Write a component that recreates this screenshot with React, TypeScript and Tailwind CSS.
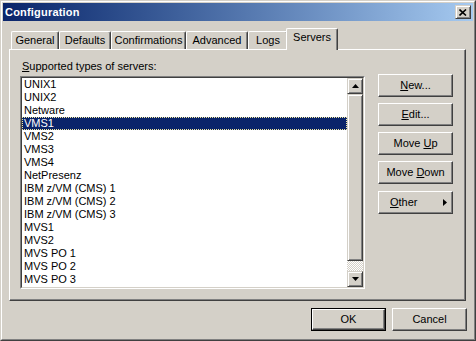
import React from "react";

const servers = [
  "UNIX1",
  "UNIX2",
  "Netware",
  "VMS1",
  "VMS2",
  "VMS3",
  "VMS4",
  "NetPresenz",
  "IBM z/VM (CMS) 1",
  "IBM z/VM (CMS) 2",
  "IBM z/VM (CMS) 3",
  "MVS1",
  "MVS2",
  "MVS PO 1",
  "MVS PO 2",
  "MVS PO 3",
  "MVS PO 4",
];

const tabs = [
  { label: "General", width: "w-[48px]" },
  { label: "Defaults", width: "w-[52px]" },
  { label: "Confirmations", width: "w-[75px]" },
  { label: "Advanced", width: "w-[62px]" },
  { label: "Logs", width: "w-[40px]" },
];

const raised =
  "border border-t-white border-l-white border-r-[#404040] border-b-[#404040] shadow-[inset_-1px_-1px_#808080] bg-[#d4d0c8]";

const scrollPart =
  "border border-t-[#d4d0c8] border-l-[#d4d0c8] border-r-[#404040] border-b-[#404040] shadow-[inset_1px_1px_#ffffff,inset_-1px_-1px_#808080] bg-[#d4d0c8]";

function PushButton({ children }: { children: React.ReactNode }) {
  return (
    <div className={`${raised} w-[75px] h-[23px] flex items-center justify-center text-black`}>
      {children}
    </div>
  );
}

export default function App() {
  const selected = 3;

  return (
    <div className="w-[476px] h-[341px] bg-[#d4d0c8] font-['Liberation_Sans',Arial,sans-serif] text-[11px] leading-[13px] text-black border border-t-[#d4d0c8] border-l-[#d4d0c8] border-r-[#404040] border-b-[#404040]">
      <div className="h-full flex flex-col border border-t-white border-l-white border-r-[#808080] border-b-[#808080] p-[1px]">
        {/* Title bar */}
        <div className="h-[18px] flex items-center justify-between bg-gradient-to-r from-[#0a246a] to-[#a6caf0] pl-[2px] pr-[2px]">
          <span className="font-bold text-white text-[11px] tracking-[0.2px]">Configuration</span>
          <div className={`${scrollPart} w-[16px] h-[14px] flex items-center justify-center`}>
            <svg width="8" height="7" viewBox="0 0 8 7">
              <path d="M0.5 0.5 L7 6.5 M7 0.5 L0.5 6.5" stroke="black" strokeWidth="1.6" />
            </svg>
          </div>
        </div>

        <div className="flex-1 flex flex-col pl-[6px]">
          {/* Tabs */}
          <div className="mt-[7px] h-[21px] flex items-end pl-[2px]">
            {tabs.map((t) => (
              <div
                key={t.label}
                className={`${t.width} h-[18px] flex justify-center pt-[2px] border-t border-l border-r border-t-white border-l-white border-r-[#404040] shadow-[inset_-1px_0_#808080] rounded-t-[2px]`}
              >
                {t.label}
              </div>
            ))}
            <div className="relative z-10 -ml-[2px] w-[52px] h-[22px] -mb-[1px] flex justify-center pt-[2px] bg-[#d4d0c8] border-t border-l border-r border-t-white border-l-white border-r-[#404040] shadow-[inset_-1px_0_#808080] rounded-t-[2px]">
              Servers
            </div>
          </div>

          {/* Panel */}
          <div className="w-[457px] h-[252px] flex border border-t-white border-l-white border-r-[#404040] border-b-[#404040] shadow-[inset_-1px_-1px_#808080] pt-[10px] pl-[10px]">
            <div className="flex flex-col">
              <div className="pl-[2px]">
                <u>S</u>upported types of servers:
              </div>
              <div className="mt-[3px] w-[345px] h-[213px] border border-t-[#808080] border-l-[#808080] border-r-white border-b-white">
                <div className="h-full flex border border-t-[#404040] border-l-[#404040] border-r-[#d4d0c8] border-b-[#d4d0c8] bg-white">
                  <div className="flex-1 overflow-hidden">
                    {servers.map((s, i) =>
                      i === selected ? (
                        <div
                          key={s}
                          className="h-[13px] leading-[11px] pl-[1px] bg-[#0a246a] text-white border border-dotted border-[#f2eaa0] whitespace-nowrap"
                        >
                          {s}
                        </div>
                      ) : (
                        <div key={s} className="h-[13px] pl-[2px] whitespace-nowrap">
                          {s}
                        </div>
                      )
                    )}
                  </div>
                  {/* Scrollbar */}
                  <div className="w-[16px] flex flex-col">
                    <div className={`${scrollPart} h-[16px] flex items-center justify-center`}>
                      <svg width="7" height="4" viewBox="0 0 7 4">
                        <polygon points="0,4 7,4 3.5,0" fill="black" />
                      </svg>
                    </div>
                    <div className={`${scrollPart} h-[167px]`} />
                    <div className="flex-1 bg-[repeating-conic-gradient(#d4d0c8_0%_25%,#ffffff_0%_50%)] bg-[length:2px_2px]" />
                    <div className={`${scrollPart} h-[16px] flex items-center justify-center`}>
                      <svg width="7" height="4" viewBox="0 0 7 4">
                        <polygon points="0,0 7,0 3.5,4" fill="black" />
                      </svg>
                    </div>
                  </div>
                </div>
              </div>
            </div>

            {/* Side buttons */}
            <div className="ml-[13px] mt-[14px] flex flex-col gap-[6px]">
              <PushButton>
                <span>
                  <u>N</u>ew...
                </span>
              </PushButton>
              <PushButton>
                <span>
                  <u>E</u>dit...
                </span>
              </PushButton>
              <PushButton>
                <span>
                  Move <u>U</u>p
                </span>
              </PushButton>
              <PushButton>
                <span>
                  Move <u>D</u>own
                </span>
              </PushButton>
              <div className={`${raised} mt-[1px] w-[75px] h-[23px] flex items-center justify-between pl-[11px] pr-[5px]`}>
                <span>
                  <u>O</u>ther
                </span>
                <svg width="4" height="7" viewBox="0 0 4 7">
                  <polygon points="0,0 4,3.5 0,7" fill="black" />
                </svg>
              </div>
            </div>
          </div>

          {/* Dialog buttons */}
          <div className="mt-[7px] flex justify-end gap-[6px] pr-[6px]">
            <div className="w-[75px] h-[23px] border border-black">
              <div className={`${raised} h-full flex items-center justify-center`}>OK</div>
            </div>
            <PushButton>Cancel</PushButton>
          </div>
        </div>
      </div>
    </div>
  );
}
